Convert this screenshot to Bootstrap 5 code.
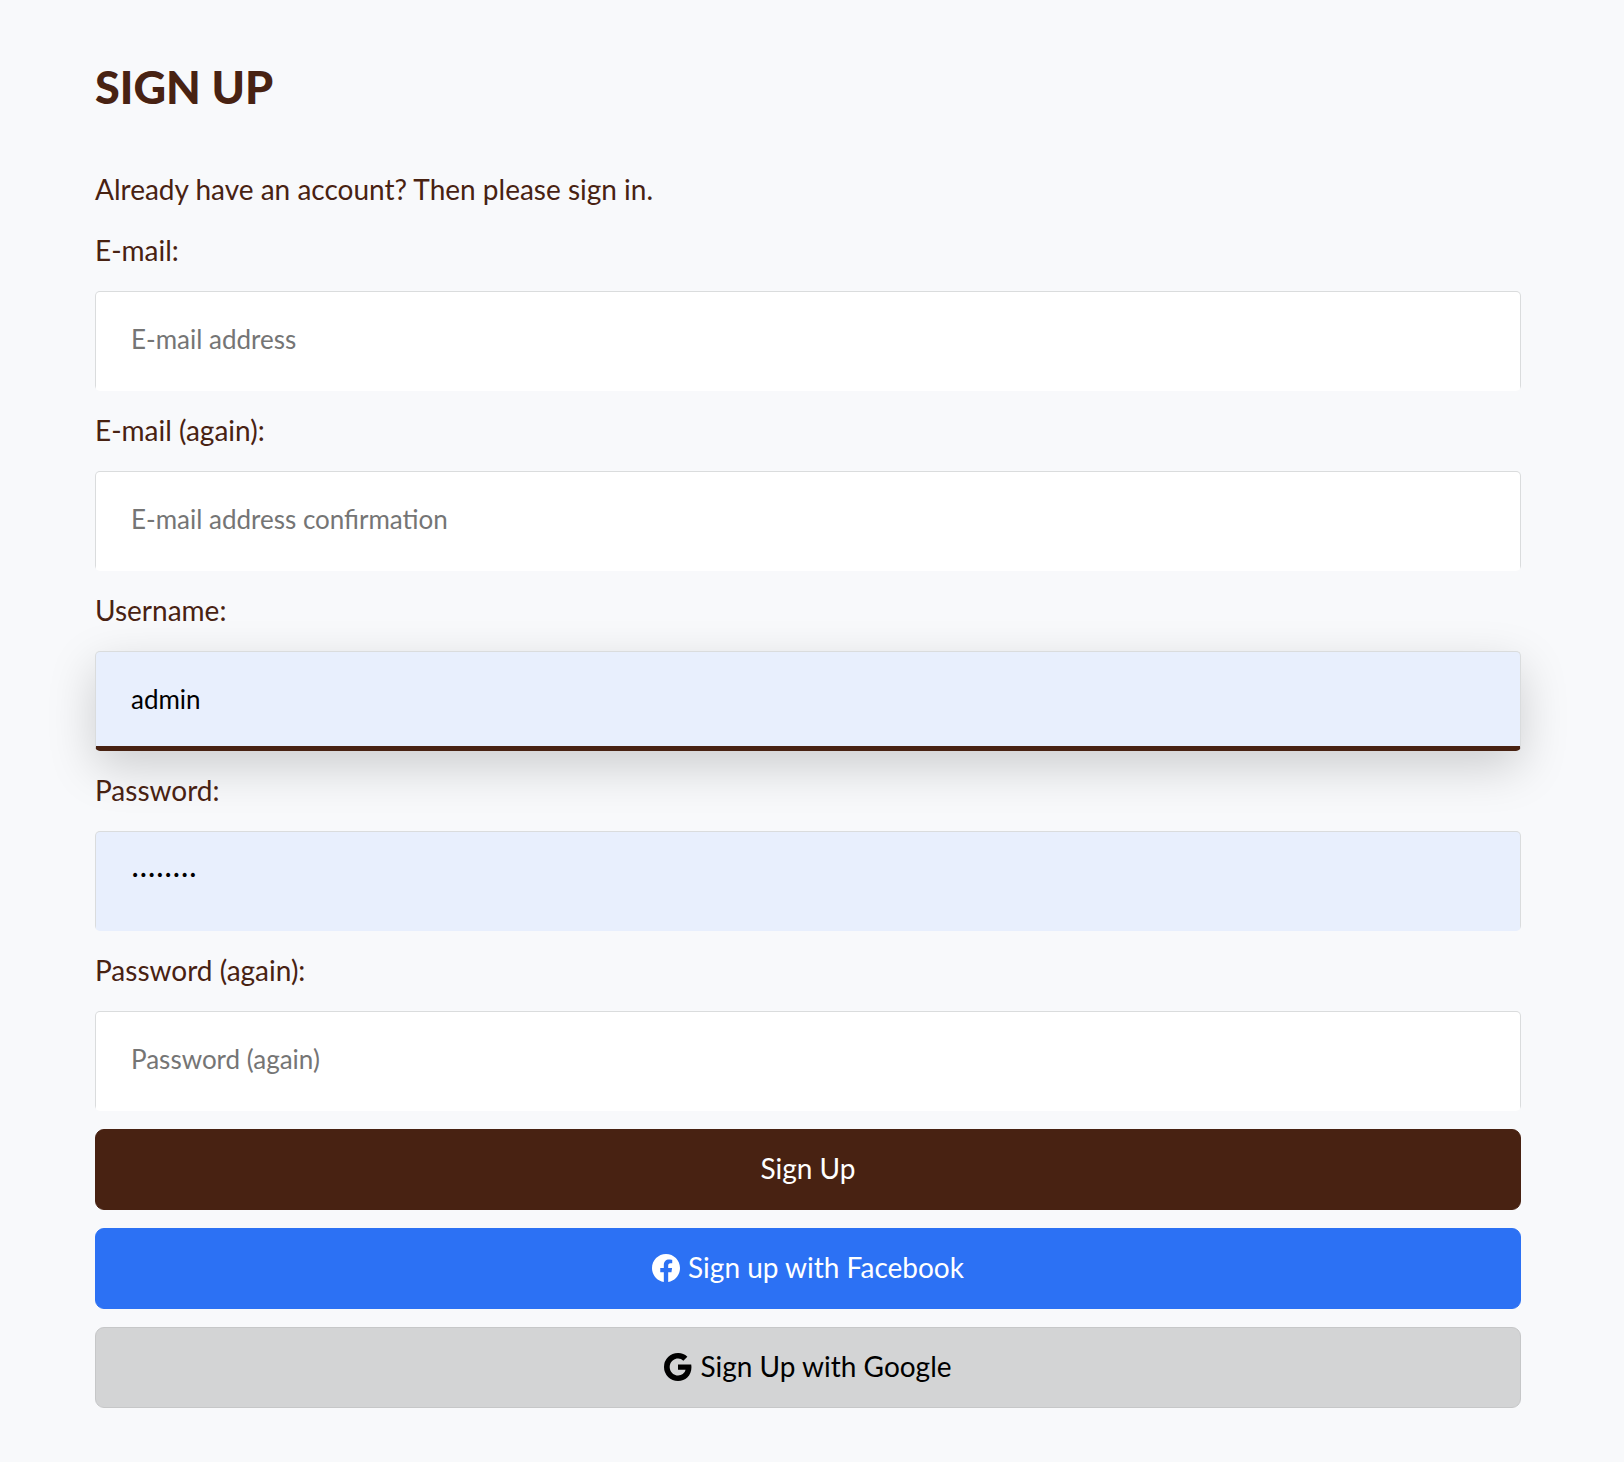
<!DOCTYPE html>
<html lang="en">
<head>
<meta charset="utf-8">
<meta name="viewport" content="width=device-width, initial-scale=1">
<title>Sign Up</title>
<link href="https://cdn.jsdelivr.net/npm/bootstrap@5.3.0/dist/css/bootstrap.min.css" rel="stylesheet">
<style>
  :root { --brand: #482212; }
  body { background: #f8f9fb; color: var(--brand); font-family: Lato, sans-serif; font-size: 28px; line-height: 43px; }
  .signup-page { padding: 60px 103px 54px 95px; }
  .signup-title { font-size: 45px; line-height: 54px; font-weight: 900; margin-bottom: 54px; }
  .signup-stack { gap: 18px; }
  .field-stack { gap: 19px; }
  .form-control.signup-input {
    height: 100px; padding: 22px 35px 23px; border: 1px solid #dadcdd; border-bottom: 5px solid transparent;
    border-radius: 5px; background: #fff; color: #000; font-size: 26px; line-height: 49px; box-shadow: none;
  }
  .signup-input::placeholder { color: #757575; opacity: 1; }
  .form-control.signup-filled { background: #e8effd; }
  .form-control.signup-current { border-bottom-color: var(--brand); box-shadow: 0 16px 48px rgba(0, 0, 0, .176); }
  .form-control.signup-dots { padding-top: 18px; padding-bottom: 27px; font-family: "DejaVu Sans", sans-serif; font-size: 14px; }
  .signup-btn { padding: 17px 18px 19px; border-radius: 9px; font-size: 28px; line-height: 43px; }
  .btn-brand, .btn-brand:hover { background: var(--brand); border-color: var(--brand); color: #fff; }
  .btn-facebook, .btn-facebook:hover { background: #2c71f4; border-color: #2c71f4; color: #fff; }
  .btn-google, .btn-google:hover { background: #d3d4d5; border-color: #c6c7c8; color: #000; }
  .brand-icon { width: 28px; height: 28px; }
</style>
<script defer src="https://cdn.jsdelivr.net/npm/bootstrap@5.3.0/dist/js/bootstrap.bundle.min.js"></script>
</head>
<body>
<main class="signup-page">
  <h1 class="signup-title text-uppercase mt-0">Sign Up</h1>
  <form class="signup-stack d-flex flex-column">
    <p class="mb-0">Already have an account? Then please sign in.</p>
    <div class="field-stack d-flex flex-column">
      <label for="email">E-mail:</label>
      <input class="form-control signup-input" type="email" id="email" placeholder="E-mail address">
    </div>
    <div class="field-stack d-flex flex-column">
      <label for="email2">E-mail (again):</label>
      <input class="form-control signup-input" type="email" id="email2" placeholder="E-mail address confirmation">
    </div>
    <div class="field-stack d-flex flex-column">
      <label for="username">Username:</label>
      <input class="form-control signup-input signup-filled signup-current" type="text" id="username" value="admin">
    </div>
    <div class="field-stack d-flex flex-column">
      <label for="password">Password:</label>
      <input class="form-control signup-input signup-filled signup-dots" type="password" id="password" value="password">
    </div>
    <div class="field-stack d-flex flex-column">
      <label for="password2">Password (again):</label>
      <input class="form-control signup-input" type="password" id="password2" placeholder="Password (again)">
    </div>
    <button type="submit" class="btn btn-brand signup-btn">Sign Up</button>
    <button type="button" class="btn btn-facebook signup-btn d-flex justify-content-center align-items-center gap-2">
      <svg class="brand-icon" viewBox="0 0 16 16" fill="currentColor" aria-hidden="true"><path d="M16 8.05C16 3.6 12.42 0 8 0S0 3.6 0 8.05c0 4.02 2.93 7.35 6.75 7.95v-5.62H4.72V8.05h2.03V6.28c0-2.02 1.2-3.13 3.02-3.13.88 0 1.79.16 1.79.16v1.98h-1.01c-.99 0-1.3.62-1.3 1.26v1.5h2.22l-.35 2.33H9.25V16C13.07 15.4 16 12.07 16 8.05z"/></svg>
      Sign up with Facebook
    </button>
    <button type="button" class="btn btn-google signup-btn d-flex justify-content-center align-items-center gap-2">
      <svg class="brand-icon" viewBox="0 0 16 16" fill="currentColor" aria-hidden="true"><path d="M15.545 6.558a9.42 9.42 0 0 1 .139 1.626c0 2.434-.87 4.492-2.384 5.885h.002C11.978 15.292 10.158 16 8 16A8 8 0 1 1 8 0a7.689 7.689 0 0 1 5.352 2.082l-2.284 2.284A4.347 4.347 0 0 0 8 3.166c-2.087 0-3.86 1.408-4.492 3.304a4.792 4.792 0 0 0 0 3.063h.003c.635 1.893 2.405 3.301 4.492 3.301 1.078 0 2.004-.276 2.722-.764h-.003a3.702 3.702 0 0 0 1.599-2.431H8v-3.08h7.545z"/></svg>
      Sign Up with Google
    </button>
  </form>
</main>
</body>
</html>
